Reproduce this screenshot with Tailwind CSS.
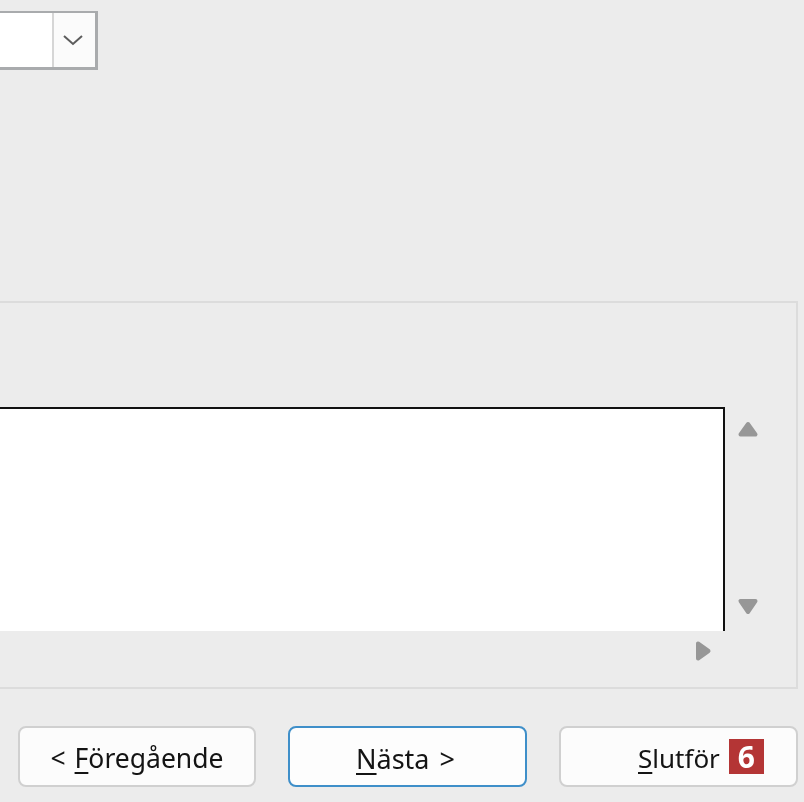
<!DOCTYPE html>
<html><head><meta charset="utf-8"><script src="https://cdn.jsdelivr.net/npm/@tailwindcss/browser@4"></script></head>
<body class="m-0">
<div class="w-[804px] h-[802px] overflow-hidden bg-[#ececec] flex flex-col font-['Noto_Sans',sans-serif] text-[#141414] pt-[11px] blur-[0.6px]">
  <div class="w-[98px] h-[59px] shrink-0 flex bg-white border-2 border-l-0 border-[#a9abad] border-b-[3px] border-r-[3px]">
    <div class="flex-1"></div>
    <div class="w-[43px] pr-[3px] bg-[#fbfbfb] border-l-2 border-[#d6d6d6] flex items-center justify-center">
      <svg width="22" height="12" viewBox="0 0 22 12" fill="none"><path d="M2 2l9 8 9-8" stroke="#5c5c5c" stroke-width="2"/></svg>
    </div>
  </div>
  <div class="mt-[231px] w-[798px] h-[388px] shrink-0 border-2 border-l-0 border-[#dcdcdc] flex flex-col">
    <div class="h-[104px] shrink-0"></div>
    <div class="flex h-[224px] shrink-0">
      <div class="w-[725px] shrink-0 bg-white border-t-2 border-r-2 border-[#111]"></div>
      <div class="flex-1 flex flex-col items-start pl-[12px] pt-[13px] pb-[15px] justify-between">
        <svg width="22" height="18" viewBox="0 0 22 18"><path d="M11 4L18.500 14.500H3.500Z" fill="#979797" stroke="#979797" stroke-width="4" stroke-linejoin="round"/></svg>
        <svg width="22" height="18" viewBox="0 0 22 18"><path d="M3.500 3H18.500L11 14Z" fill="#979797" stroke="#979797" stroke-width="4" stroke-linejoin="round"/></svg>
      </div>
    </div>
    <div class="flex-1 flex items-start pt-[9px] pl-[695px]">
      <svg width="17" height="22" viewBox="0 0 17 22"><path d="M3 3.500V18.500L13.500 11Z" fill="#979797" stroke="#979797" stroke-width="4" stroke-linejoin="round"/></svg>
    </div>
  </div>
  <div class="mt-[37px] flex gap-[32px] pl-[18px]">
    <div class="w-[238px] h-[61px] pt-[3px] rounded-[8px] border-2 border-[#d0d0d0] bg-[#fcfcfc] flex items-center justify-center text-[26.500px] leading-none"><span class="[word-spacing:2px]">&lt; <u class="underline-offset-4">F</u>öregående</span></div>
    <div class="w-[239px] h-[61px] pt-[3px] pr-[4px] rounded-[8px] border-2 border-[#3f8fc9] bg-[#fdfdfd] flex items-center justify-center text-[27px] leading-none"><span class="[word-spacing:3px]"><u class="underline-offset-4">N</u>ästa &gt;</span></div>
    <div class="w-[239px] h-[61px] rounded-[8px] border-2 border-[#d0d0d0] bg-[#fcfcfc] flex items-center pl-[77px] text-[26px] leading-none">
      <span class="pt-[3px]"><u class="underline-offset-4">S</u>lutför</span>
      <span class="ml-[9px] w-[35px] h-[35px] bg-[#b43535] text-white font-bold text-[30px] flex items-center justify-center">6</span>
    </div>
  </div>
</div>
</body></html>
